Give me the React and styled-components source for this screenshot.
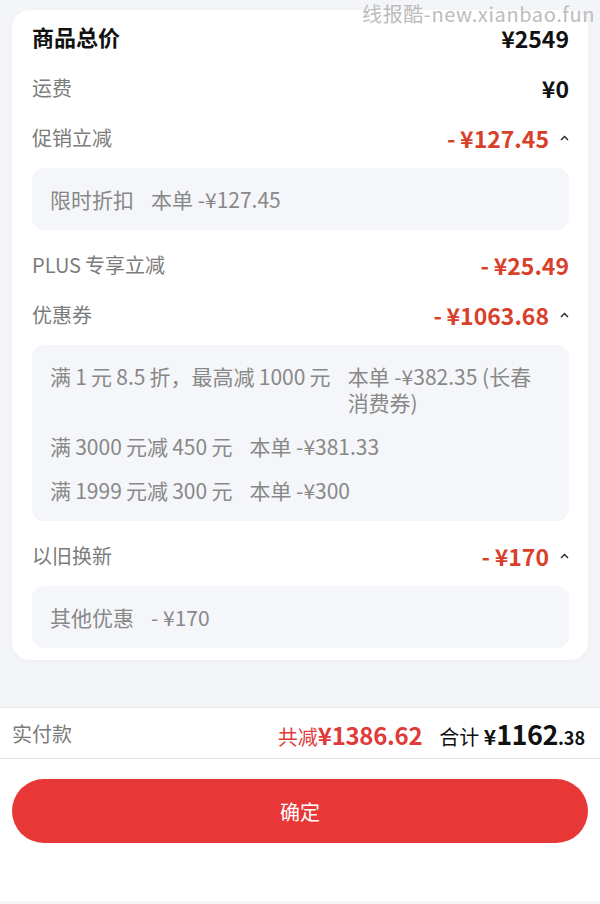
import React from 'react';
import styled, { createGlobalStyle } from 'styled-components';

const GlobalStyle = createGlobalStyle`
  * {
    box-sizing: border-box;
  }
  body {
    margin: 0;
    background: #f4f5f8;
    font-family: "Noto Sans CJK SC", "Noto Sans", sans-serif;
  }
`;

const Page = styled.div`
  position: relative;
  height: 904px;
  display: flex;
  flex-direction: column;
  background: #f4f5f8;
`;

const Watermark = styled.div`
  position: absolute;
  top: 0;
  right: 5px;
  font-size: 20px;
  line-height: 28px;
  color: #bcbcbc;
  letter-spacing: 0.6px;
`;

const Content = styled.main`
  flex: 1;
`;

const Card = styled.section`
  margin: 10px 12px 0;
  padding: 8px 19px 12px 20px;
  display: flex;
  flex-direction: column;
  gap: 10px;
  background: #fff;
  border-radius: 18px;
  box-shadow: 0 2px 8px rgba(0, 0, 0, 0.03);
`;

const Row = styled.div`
  height: 40px;
  display: flex;
  align-items: center;
  justify-content: space-between;
`;

const Label = styled.span`
  font-size: ${({ $title }) => ($title ? '22px' : '20px')};
  font-weight: ${({ $title }) => ($title ? 600 : 400)};
  color: ${({ $title }) => ($title ? '#111' : '#7b7b7b')};
  line-height: 28px;
  margin-top: ${({ $title }) => ($title ? '-4px' : '0')};
`;

const ValueWrap = styled.div`
  display: flex;
  align-items: center;
  gap: 11px;
`;

const Value = styled.span`
  font-size: 23px;
  font-weight: 700;
  line-height: 26px;
  color: ${({ $red }) => ($red ? '#d9402c' : '#111')};
`;

const DetailBox = styled.div`
  margin-bottom: 5px;
  padding: 18px 30px 18px 18px;
  display: flex;
  flex-direction: column;
  gap: 18px;
  background: #f5f6f9;
  border-radius: 12px;

  &:last-child {
    margin-bottom: 0;
  }
`;

const DetailLine = styled.div`
  display: flex;
  gap: 17px;
  font-size: 21px;
  line-height: 26px;
  color: #888;
`;

const DetailName = styled.span`
  flex: none;
`;

const DetailText = styled.span`
  flex: 1;
`;

const Footer = styled.footer`
  background: #fff;
  border-top: 1px solid #e7e7e9;
  border-bottom: 3px solid #f4f5f8;
`;

const Summary = styled.div`
  height: 51px;
  padding: 0 15px 0 12px;
  display: flex;
  align-items: center;
  justify-content: space-between;
  border-bottom: 1px solid #e7e7e9;
`;

const SummaryLabel = styled.span`
  font-size: 20px;
  color: #7b7b7b;
`;

const Totals = styled.div`
  display: flex;
  align-items: baseline;
  gap: 17px;
`;

const Cut = styled.span`
  font-size: 20px;
  color: #e03a3a;

  b {
    font-size: 24px;
    font-weight: 700;
    letter-spacing: -0.3px;
  }
`;

const Sum = styled.span`
  font-size: 20px;
  color: #111;

  b {
    font-size: 21px;
    font-weight: 700;
  }
  strong {
    font-size: 27px;
    font-weight: 700;
    letter-spacing: -0.5px;
  }
  small {
    font-size: 18px;
    font-weight: 600;
  }
`;

const ConfirmButton = styled.button`
  display: block;
  width: calc(100% - 24px);
  height: 64px;
  margin: 20px 12px 58px;
  border: none;
  border-radius: 32px;
  background: #e83737;
  color: #fff;
  font-family: inherit;
  font-size: 20px;
`;

const Caret = () => (
  <svg width="9" height="6" viewBox="0 0 9 6">
    <polyline points="1,5 4.5,1.5 8,5" fill="none" stroke="#222" strokeWidth="1.4" />
  </svg>
);

const ts = '\u2009';

function PriceRow({ label, value, red, title, caret }) {
  return (
    <Row>
      <Label $title={title}>{label}</Label>
      <ValueWrap>
        <Value $red={red}>{value}</Value>
        {caret && <Caret />}
      </ValueWrap>
    </Row>
  );
}

function App() {
  return (
    <Page>
      <GlobalStyle />
      <Watermark>线报酷-new.xianbao.fun</Watermark>
      <Content>
        <Card>
          <PriceRow label="商品总价" value="¥2549" title />
          <PriceRow label="运费" value="¥0" />
          <PriceRow label="促销立减" value={`-${ts}¥127.45`} red caret />
          <DetailBox>
            <DetailLine>
              <DetailName>限时折扣</DetailName>
              <DetailText>本单 -¥127.45</DetailText>
            </DetailLine>
          </DetailBox>
          <PriceRow label={`PLUS${ts}专享立减`} value={`-${ts}¥25.49`} red />
          <PriceRow label="优惠券" value={`-${ts}¥1063.68`} red caret />
          <DetailBox>
            <DetailLine>
              <DetailName>{`满${ts}1${ts}元${ts}8.5${ts}折，最高减${ts}1000${ts}元`}</DetailName>
              <DetailText>本单 -¥382.35 (长春消费券)</DetailText>
            </DetailLine>
            <DetailLine>
              <DetailName>{`满${ts}3000${ts}元减${ts}450${ts}元`}</DetailName>
              <DetailText>本单 -¥381.33</DetailText>
            </DetailLine>
            <DetailLine>
              <DetailName>{`满${ts}1999${ts}元减${ts}300${ts}元`}</DetailName>
              <DetailText>本单 -¥300</DetailText>
            </DetailLine>
          </DetailBox>
          <PriceRow label="以旧换新" value={`-${ts}¥170`} red caret />
          <DetailBox>
            <DetailLine>
              <DetailName>其他优惠</DetailName>
              <DetailText>- ¥170</DetailText>
            </DetailLine>
          </DetailBox>
        </Card>
      </Content>
      <Footer>
        <Summary>
          <SummaryLabel>实付款</SummaryLabel>
          <Totals>
            <Cut>
              共减<b>¥1386.62</b>
            </Cut>
            <Sum>
              合计 <b>¥</b>
              <strong>1162</strong>
              <small>.38</small>
            </Sum>
          </Totals>
        </Summary>
        <ConfirmButton>确定</ConfirmButton>
      </Footer>
    </Page>
  );
}

export default App;
